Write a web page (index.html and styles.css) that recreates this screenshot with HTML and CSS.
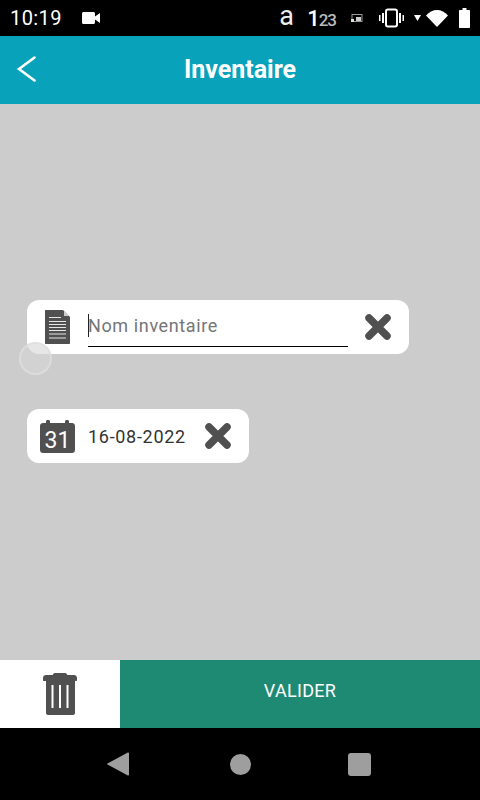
FILE: index.html
```html
<!DOCTYPE html>
<html lang="fr">
  <head>
    <meta charset="UTF-8" />
    <meta name="viewport" content="width=device-width, initial-scale=1.0" />
    <title>Inventaire</title>
    <link rel="stylesheet" href="styles.css">
  </head>
  <body>
    <div class="screen">
      <div class="status-bar">
        <div class="status-left">
          <span class="clock">10:19</span>
          <svg class="cam-icon" width="18" height="12" viewBox="0 0 18 12"><path d="M0 1.500C0 .7.7 0 1.500 0h10c.8 0 1.500.7 1.500 1.500V4.500L18 1v10l-5-3.500v3c0 .8-.7 1.500-1.500 1.500h-10C.7 12 0 11.300 0 10.500z" fill="#fff"/></svg>
        </div>
        <div class="status-right">
          <span class="status-a">a</span>
          <span class="status-num"><span class="num-one">1</span><span class="num-rest">23</span></span>
          <svg class="cast-icon" width="12" height="9" viewBox="0 0 12 9"><rect x="1" y="0.500" width="10" height="7" fill="none" stroke="#999"/><rect x="5" y="3" width="5" height="4" fill="#ccc"/><path d="M0 5h3v3H0z" fill="#ddd"/></svg>
          <svg class="vibrate-icon" width="25" height="20" viewBox="0 0 25 20"><rect x="7" y="1.500" width="11" height="17" rx="2" fill="none" stroke="#fff" stroke-width="2"/><rect x="3" y="5" width="2" height="10" fill="#fff"/><rect x="20" y="5" width="2" height="10" fill="#fff"/><rect x="0" y="7" width="1.500" height="6" fill="#fff"/><rect x="23.500" y="7" width="1.500" height="6" fill="#fff"/></svg>
          <svg class="wifi-arrow" width="7" height="6" viewBox="0 0 7 6"><path d="M0 0h7L3.500 6z" fill="#fff"/></svg>
          <svg class="wifi-icon" width="22" height="17" viewBox="0 0 22 17"><path d="M0 5.500C3 2 7 0 11 0s8 2 11 5.500L11 17z" fill="#fff"/></svg>
          <svg class="battery" width="11" height="20" viewBox="0 0 11 20"><path d="M3.500 0h4v2H10c.6 0 1 .4 1 1v16c0 .6-.4 1-1 1H1c-.6 0-1-.4-1-1V3c0-.6.4-1 1-1h2.500z" fill="#fff"/></svg>
        </div>
      </div>

      <div class="app-bar">
        <svg class="back-icon" width="20" height="28" viewBox="0 0 20 28"><path d="M18.500 2.500L3 14l15.500 11.500" fill="none" stroke="#fff" stroke-width="2.600" stroke-linecap="round"/></svg>
        <h1 class="title">Inventaire</h1>
      </div>

      <div class="content">
        <div class="card card-name">
          <svg class="doc-icon" width="25" height="34" viewBox="0 0 25 34">
            <path d="M1 0h17l7 7v26c0 .6-.4 1-1 1H1c-.6 0-1-.4-1-1V1c0-.6.4-1 1-1z" fill="#505050"/>
            <path d="M19 0.500L24.500 6H19z" fill="#ccc"/>
            <path d="M4 7.500h12M4 11.500h17M4 14.500h17M4 17.500h17M4 20.500h17M4 24h17M4 28h17" stroke="#e6e6e6" stroke-width="1.200"/>
          </svg>
          <div class="name-field">
            <span class="caret"></span>
            <span class="placeholder">Nom inventaire</span>
          </div>
          <svg class="close-icon" width="26" height="26" viewBox="0 0 26 26"><path d="M4 4l18 18M22 4L4 22" stroke="#505050" stroke-width="7.500" stroke-linecap="round"/></svg>
        </div>

        <div class="card card-date">
          <svg class="cal-icon" width="35" height="33" viewBox="0 0 35 33">
            <path d="M3 3h3V1.500C6 .7 6.700 0 7.500 0h1C9.300 0 10 .7 10 1.500V3h15V1.500C25 .7 25.700 0 26.500 0h1c.8 0 1.500.7 1.500 1.500V3h3c1.700 0 3 1.300 3 3v24c0 1.700-1.300 3-3 3H3c-1.700 0-3-1.300-3-3V6c0-1.700 1.300-3 3-3z" fill="#505050"/>
            <text class="cal-text" x="17.500" y="27.500" text-anchor="middle">31</text>
          </svg>
          <span class="date-text">16-08-2022</span>
          <svg class="close-icon" width="26" height="26" viewBox="0 0 26 26"><path d="M4 4l18 18M22 4L4 22" stroke="#505050" stroke-width="7.500" stroke-linecap="round"/></svg>
        </div>

        <div class="touch-dot"></div>
      </div>

      <div class="actions">
        <div class="trash-box">
          <svg width="34" height="42" viewBox="0 0 34 42">
            <path d="M12 0h10c1 0 2 .8 2.300 2H31c1.700 0 3 1.300 3 3v2c0 .6-.4 1-1 1h-1v32c0 1.100-.9 2-2 2H5c-1.100 0-2-.9-2-2V8H1C.4 8 0 7.600 0 7V5c0-1.700 1.300-3 3-3h6.700C10 .8 11 0 12 0z" fill="#505050"/>
            <path d="M9.500 12v23M17 12v23M24.500 12v23" stroke="#fff" stroke-width="2"/>
          </svg>
        </div>
        <div class="validate">VALIDER</div>
      </div>

      <div class="nav-bar">
        <svg width="22" height="24" viewBox="0 0 22 24"><path d="M21 0.500c.5 0 1 .4 1 1v21c0 .7-.6 1-1 1-.2 0-.4 0-.6-.2L.5 12.500c-.6-.3-.6-.8 0-1.100L20.400.7c.2-.1.400-.2.600-.2z" fill="#9e9e9e"/></svg>
        <div class="nav-circle"></div>
        <div class="nav-square"></div>
      </div>
    </div>
  </body>
</html>
```

FILE: styles.css
```css
* {
  box-sizing: border-box;
}

body {
  margin: 0;
  font-family: Roboto, "Liberation Sans", sans-serif;
}

.screen {
  width: 480px;
  height: 800px;
  display: flex;
  flex-direction: column;
  position: relative;
  overflow: hidden;
}

.status-bar {
  height: 36px;
  background-color: #000;
  color: #fff;
  display: flex;
  align-items: center;
  justify-content: space-between;
  padding: 0 10px;
}

.status-left {
  display: flex;
  align-items: center;
  gap: 20px;
}

.clock {
  font-size: 20px;
  letter-spacing: 0.4px;
}

.status-right {
  display: flex;
  align-items: center;
}

.status-a {
  font-size: 27px;
  font-weight: 400;
  margin-right: 15px;
  position: relative;
  top: -2px;
  color: #eee;
}

.status-num {
  display: flex;
  align-items: baseline;
  justify-content: flex-end;
  margin-right: 15px;
  width: 27px;
}

.num-one {
  font-size: 22px;
  font-weight: 500;
  margin-right: -1px;
}

.num-rest {
  font-size: 17px;
  font-weight: 500;
  color: #bbb;
  letter-spacing: -1px;
}

.cast-icon {
  margin-right: 16px;
}

.vibrate-icon {
  margin-right: 10px;
}

.wifi-arrow {
  margin-right: 5px;
}

.battery {
  margin-left: 11px;
}

.app-bar {
  height: 68px;
  background-color: #08a2bb;
  display: flex;
  align-items: center;
  justify-content: center;
  position: relative;
  padding-bottom: 2px;
}

.back-icon {
  position: absolute;
  left: 16px;
  top: 19px;
}

.title {
  margin: 0;
  color: #fff;
  font-size: 25px;
  font-weight: 700;
}

.content {
  flex: 1;
  background-color: #ccc;
  padding: 196px 0 0 27px;
  display: flex;
  flex-direction: column;
  align-items: flex-start;
  gap: 55px;
  position: relative;
}

.card {
  background-color: #fff;
  border-radius: 12px;
  height: 54px;
  display: flex;
  align-items: center;
}

.card-name {
  width: 382px;
  padding: 0 18px;
}

.card-date {
  width: 222px;
  padding: 0 18px 0 13px;
}

.doc-icon {
  flex: none;
}

.name-field {
  width: 260px;
  height: 47px;
  margin: 0 17px 0 18px;
  padding-top: 5px;
  border-bottom: 1px solid #000;
  position: relative;
  display: flex;
  align-items: center;
  align-self: flex-start;
  flex: none;
}

.placeholder {
  font-size: 18px;
  color: #757575;
  letter-spacing: 0.62px;
}

.caret {
  position: absolute;
  left: 0;
  top: 14px;
  width: 1px;
  height: 23px;
  background-color: #222;
}

.close-icon {
  flex: none;
}

.cal-text {
  font-family: Roboto, "Liberation Sans", sans-serif;
  font-size: 23px;
  font-weight: 400;
  fill: #fff;
}

.cal-icon {
  flex: none;
  margin-right: 13px;
}

.date-text {
  font-size: 18px;
  color: #333;
  letter-spacing: 0.7px;
  margin-right: 19px;
  white-space: nowrap;
}

.touch-dot {
  position: absolute;
  left: 19px;
  top: 238px;
  width: 33px;
  height: 33px;
  border-radius: 50%;
  background-color: rgba(214, 214, 214, 0.6);
  border: 2px solid rgba(222, 222, 222, 0.8);
}

.actions {
  height: 68px;
  display: flex;
}

.trash-box {
  width: 120px;
  background-color: #fff;
  display: flex;
  align-items: center;
  justify-content: center;
}

.validate {
  flex: 1;
  background-color: #1e8a74;
  color: #fff;
  font-size: 18px;
  letter-spacing: 0.3px;
  padding-bottom: 8px;
  display: flex;
  align-items: center;
  justify-content: center;
}

.nav-bar {
  height: 72px;
  background-color: #000;
  display: flex;
  align-items: center;
  position: relative;
  padding: 0 109px 0 107px;
  justify-content: space-between;
}

.nav-circle {
  width: 21px;
  height: 21px;
  margin-left: 3px;
  border-radius: 50%;
  background-color: #9e9e9e;
}

.nav-square {
  width: 23px;
  height: 23px;
  border-radius: 3px;
  background-color: #9e9e9e;
}
```
